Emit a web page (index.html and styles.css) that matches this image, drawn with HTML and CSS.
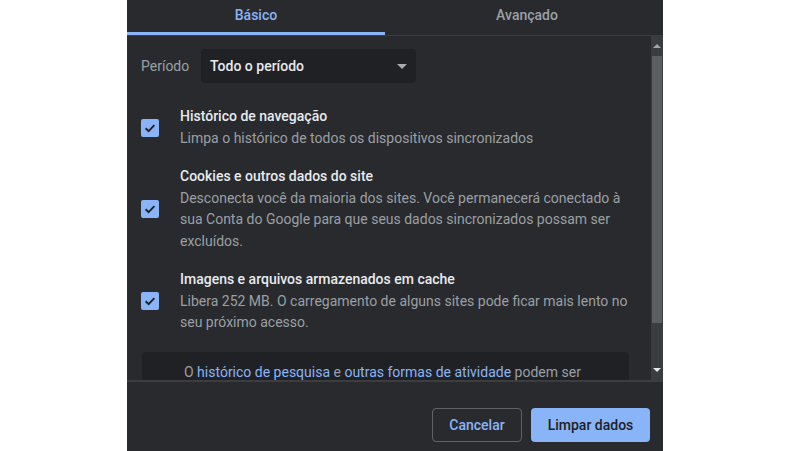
FILE: index.html
```html
<!DOCTYPE html>
<html lang="pt-BR">
<head>
<meta charset="utf-8">
<title>Limpar dados de navegação</title>
<link rel="stylesheet" href="styles.css">
</head>
<body>
<div class="dialog">
  <div class="tabs">
    <div class="tab tab-active">Básico</div>
    <div class="tab tab-rest">Avançado</div>
  </div>
  <div class="body">
    <div class="content">
      <div class="period-row">
        <span class="period-label">Período</span>
        <div class="select">
          <span>Todo o período</span>
          <svg class="select-arrow" width="10" height="5" viewBox="0 0 10 5"><path d="M0 0 L10 0 L5 5 Z" fill="#a9abae"/></svg>
        </div>
      </div>
      <div class="item item-first">
        <div class="checkbox"><svg width="18" height="18" viewBox="0 0 18 18"><path d="M4.6 9.2 L7.6 12.1 L13.4 6.2" fill="none" stroke="#202124" stroke-width="1.9"/></svg></div>
        <div class="item-text">
          <div class="item-title">Histórico de navegação</div>
          <div class="item-desc">Limpa o histórico de todos os dispositivos sincronizados</div>
        </div>
      </div>
      <div class="item">
        <div class="checkbox"><svg width="18" height="18" viewBox="0 0 18 18"><path d="M4.6 9.2 L7.6 12.1 L13.4 6.2" fill="none" stroke="#202124" stroke-width="1.9"/></svg></div>
        <div class="item-text">
          <div class="item-title">Cookies e outros dados do site</div>
          <div class="item-desc">Desconecta você da maioria dos sites. Você permanecerá conectado à sua Conta do Google para que seus dados sincronizados possam ser excluídos.</div>
        </div>
      </div>
      <div class="item">
        <div class="checkbox"><svg width="18" height="18" viewBox="0 0 18 18"><path d="M4.6 9.2 L7.6 12.1 L13.4 6.2" fill="none" stroke="#202124" stroke-width="1.9"/></svg></div>
        <div class="item-text">
          <div class="item-title">Imagens e arquivos armazenados em cache</div>
          <div class="item-desc">Libera 252 MB. O carregamento de alguns sites pode ficar mais lento no seu próximo acesso.</div>
        </div>
      </div>
      <div class="info">
        <span>O <a class="link" href="#">histórico de pesquisa</a> e <a class="link" href="#">outras formas de atividade</a> podem ser</span>
      </div>
    </div>
    <div class="scrollbar">
      <div class="sb-btn"><svg width="8" height="4" viewBox="0 0 8 4"><path d="M0 4 L8 4 L4 0 Z" fill="#a4a5a7"/></svg></div>
      <div class="sb-track"><div class="sb-thumb"></div></div>
      <div class="sb-btn sb-btn-down"><svg width="8" height="4" viewBox="0 0 8 4"><path d="M0 0 L8 0 L4 4 Z" fill="#e8e8e8"/></svg></div>
    </div>
  </div>
  <div class="footer">
    <button class="btn btn-cancel">Cancelar</button>
    <button class="btn btn-primary">Limpar dados</button>
  </div>
</div>
</body>
</html>
```
FILE: styles.css
```css
html, body {
  margin: 0;
  padding: 0;
  background: #ffffff;
}
body {
  font-family: Roboto, "Noto Sans", sans-serif;
  font-size: 14px;
}
.dialog {
  margin-left: 127px;
  width: 536px;
  height: 451px;
  background: #292a2d;
  display: flex;
  flex-direction: column;
  overflow: hidden;
}
.tabs {
  display: flex;
  height: 35px;
  border-bottom: 1px solid #3c3d40;
  flex-shrink: 0;
}
.tab {
  display: flex;
  align-items: center;
  justify-content: center;
  font-weight: 500;
  font-size: 14px;
  padding-bottom: 5px;
  box-sizing: border-box;
}
.tab-active {
  width: 258px;
  color: #8ab4f8;
  border-bottom: 3px solid #8ab4f8;
  padding-bottom: 2px;
}
.tab-rest {
  flex: 1;
  color: #9aa0a6;
  padding-left: 6px;
}
.body {
  height: 344px;
  display: flex;
  flex-shrink: 0;
  border-left: 1px solid #2e2f32;
}
.content {
  flex: 1;
  overflow: hidden;
  padding: 13px 22px 0 13px;
}
.period-row {
  display: flex;
  align-items: center;
  height: 34px;
}
.period-label {
  width: 60px;
  color: #9aa0a6;
  font-size: 14px;
}
.select {
  width: 215px;
  height: 34px;
  box-sizing: border-box;
  background: #202124;
  border-radius: 4px;
  display: flex;
  align-items: center;
  justify-content: space-between;
  padding: 0 9px 0 9px;
  color: #e8eaed;
  font-weight: 500;
}
.select-arrow {
  display: block;
}
.item {
  display: flex;
  align-items: center;
  margin-top: 17px;
}
.item-first {
  margin-top: 23px;
}
.checkbox {
  width: 18px;
  height: 18px;
  border-radius: 2px;
  background: #8ab4f8;
  flex-shrink: 0;
  margin-right: 21px;
}
.checkbox svg {
  display: block;
}
.item-text {
  flex: 1;
  line-height: 21.5px;
}
.item-title {
  color: #e8eaed;
  font-weight: 500;
}
.item-desc {
  color: #9aa0a6;
}
.info {
  margin-top: 18px;
  margin-left: 1px;
  background: #202124;
  border-radius: 4px;
  padding: 10px 40px 30px 42px;
  color: #9aa0a6;
  line-height: 21px;
  white-space: nowrap;
}
.link {
  color: #8ab4f8;
  text-decoration: none;
}
.scrollbar {
  width: 12px;
  background: #3b3c3f;
  display: flex;
  flex-direction: column;
  flex-shrink: 0;
}
.sb-btn {
  height: 20px;
  display: flex;
  align-items: center;
  justify-content: center;
}
.sb-btn-down {
  height: 22px;
  align-items: flex-start;
  padding-top: 10px;
  box-sizing: border-box;
}
.sb-track {
  flex: 1;
  padding: 0 1px;
}
.sb-thumb {
  height: 267px;
  background: #5d5e61;
}
.footer {
  flex: 1;
  border-top: 2px solid #3c3d40;
  display: flex;
  justify-content: flex-end;
  align-items: flex-start;
  padding: 26px 13px 0 0;
  gap: 9px;
}
.btn {
  height: 34px;
  border-radius: 4px;
  font-family: Roboto, "Noto Sans", sans-serif;
  font-size: 14px;
  font-weight: 500;
  box-sizing: border-box;
  cursor: pointer;
}
.btn-cancel {
  width: 90px;
  background: transparent;
  border: 1px solid #5f6368;
  color: #8ab4f8;
}
.btn-primary {
  width: 119px;
  background: #8ab4f8;
  border: none;
  color: #202124;
}
```
